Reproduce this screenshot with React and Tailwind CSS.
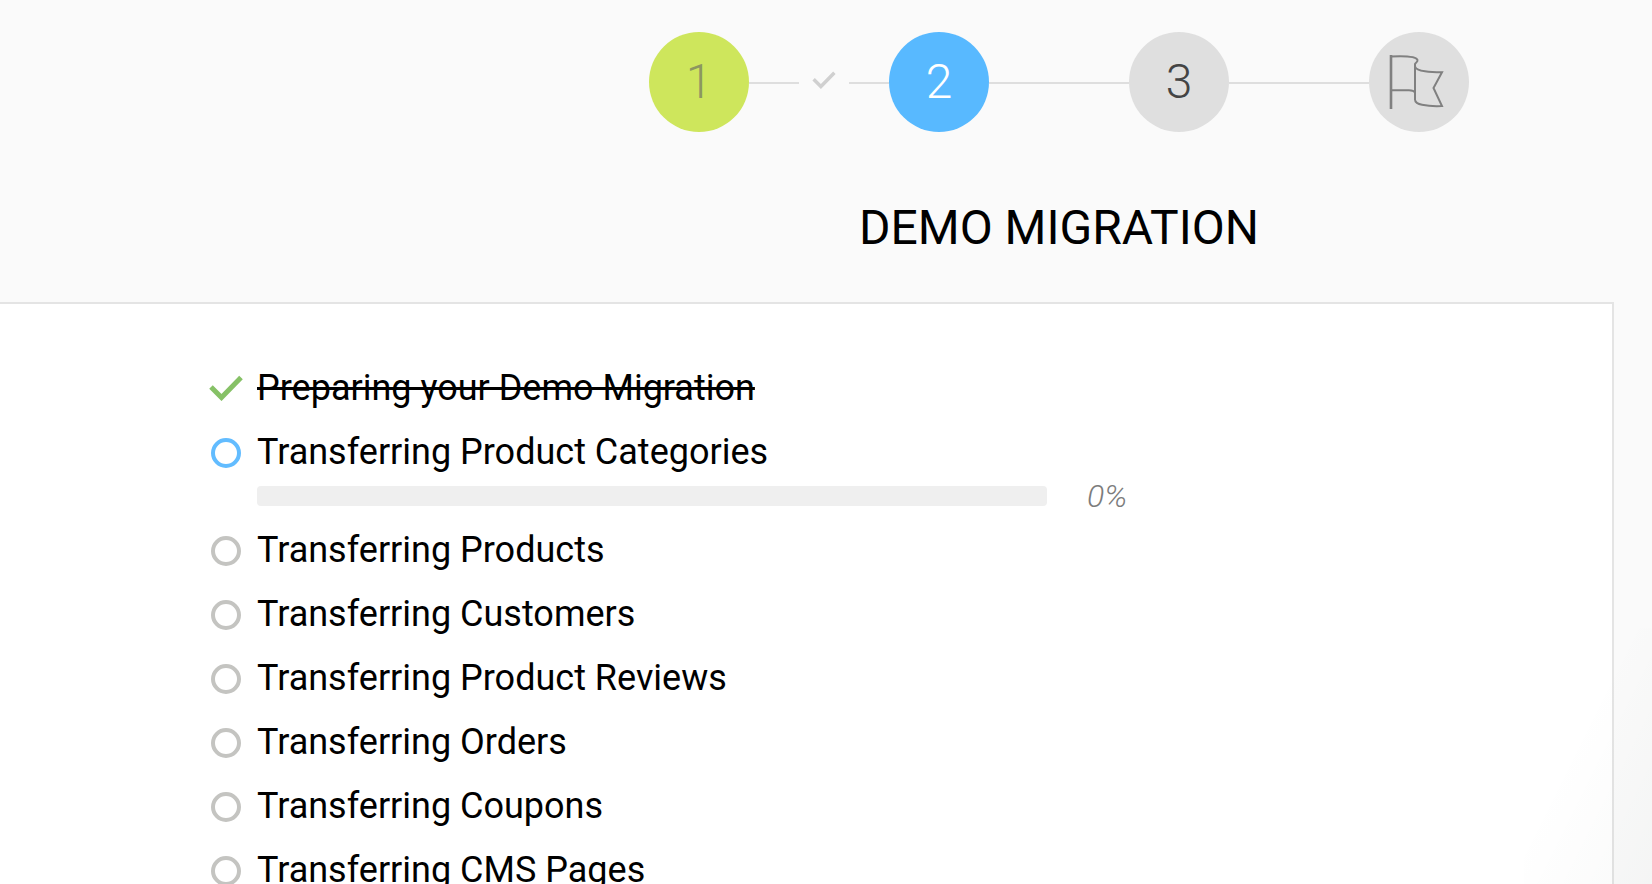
import React from "react";

const tasks = [
    { label: "Preparing your Demo Migration", status: "done" },
    { label: "Transferring Product Categories", status: "active", progress: 0 },
    { label: "Transferring Products", status: "waiting" },
    { label: "Transferring Customers", status: "waiting" },
    { label: "Transferring Product Reviews", status: "waiting" },
    { label: "Transferring Orders", status: "waiting" },
    { label: "Transferring Coupons", status: "waiting" },
    { label: "Transferring CMS Pages", status: "waiting" },
];

const FlagIcon = () => (
    <svg className="w-14 h-14 mr-1" viewBox="0 0 56 56" fill="none" stroke="#808080" strokeWidth="2">
        <path d="M2 1v54" strokeWidth="2.6" />
        <path d="M2 2.5C13 2 27.500 2.200 28.500 6c.4 1.600-1.500 2.500-2.500 4V46" />
        <path d="M2 36.300h18c3 0 5 .5 6 2.500" />
        <path d="M26 12.500c1 3.500 5 4.200 10 4.800 5 .8 11 1 17 1l-8.500 15.700 8.500 18c-7 .4-14 0-20-1.200-4-.8-6.500-1.800-7-4.800" />
    </svg>
);

const CheckIcon = ({ className }) => (
    <svg className={className} viewBox="0 0 34 26" fill="none" stroke="currentColor" strokeWidth="5">
        <path d="M2 12l10.500 10.500L32 2.500" />
    </svg>
);

const Circle = ({ className, children }) => (
    <li className={`w-25 h-25 shrink-0 rounded-full flex items-center justify-center text-5xl font-light ${className}`}>{children}</li>
);

const Line = ({ className }) => <li aria-hidden="true" className={`h-0.5 mt-0.5 shrink-0 bg-[#dedede] ${className}`} />;

const StatusIcon = ({ status }) => {
    if (status === "done") return <CheckIcon className="w-[34px] h-[26px] text-[#86c166]" />;
    return <span className={`w-[30px] h-[30px] mx-0.5 mt-0.5 rounded-full border-4 ${status === "active" ? "border-[#62bcff]" : "border-[#c4c4c1]"}`} />;
};

const Task = ({ label, status, progress }) => (
    <li>
        <div className="flex items-center h-16 gap-3.5">
            <StatusIcon status={status} />
            <span className={`text-4xl/[64px] whitespace-nowrap ${status === "done" ? "line-through" : ""}`}>{label}</span>
        </div>
        {progress !== undefined && (
            <div className="flex items-center h-5 mt-0.5 mb-3 pl-12 gap-10">
                <div role="progressbar" aria-label={label} aria-valuenow={progress} className="w-[790px] h-5 rounded bg-[#efefef] overflow-hidden">
                    <div className="h-full bg-[#58b9ff]" style={{ width: `${progress}%` }} />
                </div>
                <span className="text-[32px] font-light italic text-[#7c7c7c]">{progress}%</span>
            </div>
        )}
    </li>
);

const App = () => {
    return (
        <div className="relative h-screen overflow-hidden bg-[#fafafa] text-black font-['Roboto',sans-serif]">
            <header className="flex flex-col items-center pt-8 pb-[46px] pl-[466px]">
                <ol className="flex items-center">
                    <Circle className="bg-[#cee65c] text-[#8c9760]">1</Circle>
                    <Line className="w-[50px]" />
                    <li className="w-[50px] flex justify-center pb-1">
                        <CheckIcon className="w-6 h-[18px] text-[#d0d0d0]" />
                    </li>
                    <Line className="w-10" />
                    <Circle className="bg-[#58b9ff] text-white">2</Circle>
                    <Line className="w-[140px]" />
                    <Circle className="bg-[#dfdfdf] text-[#444]">3</Circle>
                    <Line className="w-[140px]" />
                    <Circle className="bg-[#dfdfdf]">
                        <FlagIcon />
                    </Circle>
                </ol>
                <h1 className="mt-[68px] text-5xl/[56px] uppercase">Demo Migration</h1>
            </header>

            <main className="mr-[38px] min-h-full bg-white border-t-2 border-r-2 border-[#e4e4e4] pt-[52px] pl-[209px]">
                <ul>
                    {tasks.map((task) => (
                        <Task key={task.label} {...task} />
                    ))}
                </ul>
            </main>

            {/* soft shade in the corner */}
            <div className="absolute right-0 bottom-0 w-32 h-64 pointer-events-none bg-linear-to-br from-transparent from-40% to-[#00201806]" />
        </div>
    );
};

export default App;
